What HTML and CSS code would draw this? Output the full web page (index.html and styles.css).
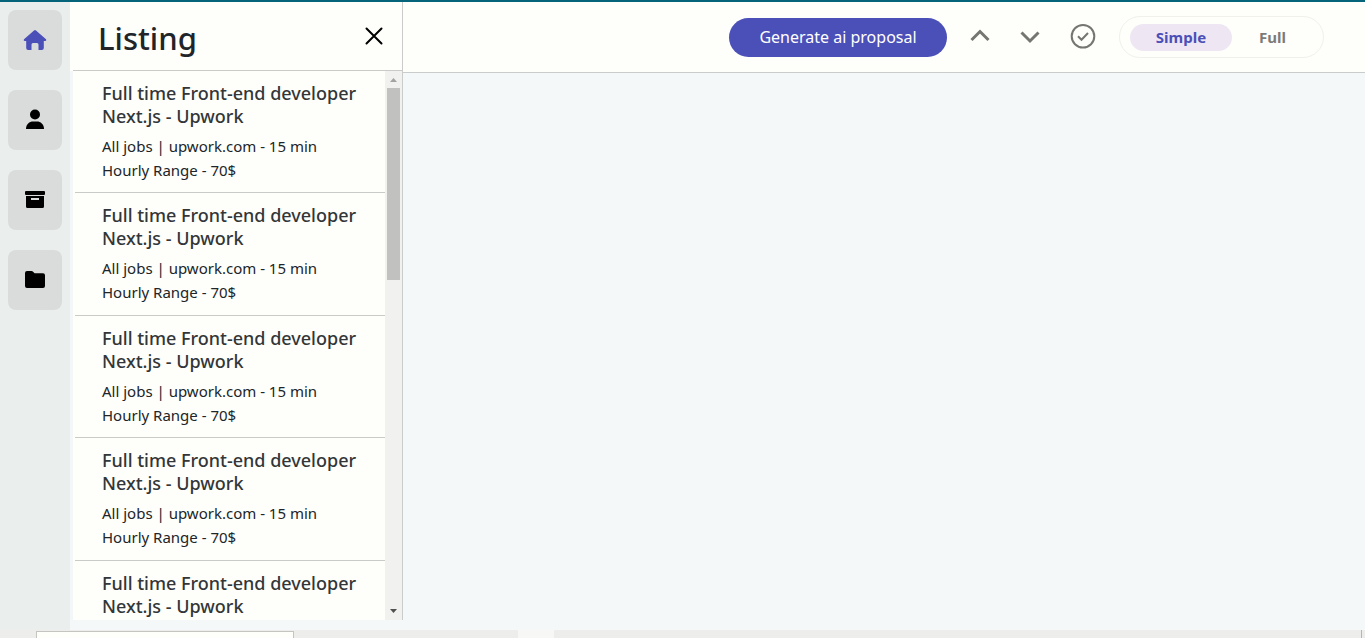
FILE: index.html
```html
<!DOCTYPE html>
<html lang="en">
<head>
    <meta charset="UTF-8">
    <meta name="viewport" content="width=device-width, initial-scale=1.0">
    <title>Listing</title>
    <link rel="stylesheet" href="styles.css">
</head>
<body>
    <div class="app">
        <nav class="sidebar">
            <button type="button" class="side-btn active" aria-label="Home">
                <svg width="24" height="22" viewBox="0 0 24 22"><path d="M11 1.500Q12 .6 13 1.500L23 10.300Q24 11.600 22.400 12H20.800V19Q20.800 21 18.800 21H15.500V15.500Q15.500 14 14 14H10Q8.500 14 8.500 15.500V21H5.200Q3.200 21 3.200 19V12H1.600Q0 11.600 1 10.300Z"/></svg>
            </button>
            <button type="button" class="side-btn" aria-label="Profile">
                <svg width="24" height="22" viewBox="0 0 24 22"><circle cx="12" cy="5.500" r="5"/><path d="M3 20C3 15 6.500 12.500 10 12.500H14C17.500 12.500 21 15 21 20Z"/></svg>
            </button>
            <button type="button" class="side-btn" aria-label="Archive">
                <svg width="24" height="22" viewBox="0 0 24 22"><rect x="2" y="2" width="20" height="4" rx="1"/><path fill-rule="evenodd" d="M3 7H21V17.500Q21 19 19.500 19H4.500Q3 19 3 17.500ZM8 9V11H16V9Z"/></svg>
            </button>
            <button type="button" class="side-btn" aria-label="Folders">
                <svg width="24" height="22" viewBox="0 0 24 22"><path d="M2 4Q2 2 4 2H8.500Q9.500 2 10.300 2.900L11.600 4.200H20Q22 4.200 22 6.200V17Q22 19 20 19H4Q2 19 2 17Z"/></svg>
            </button>
        </nav>

        <aside class="panel">
            <div class="panel-header">
                <h1>Listing</h1>
                <button type="button" class="close-btn" aria-label="Close">
                    <svg width="18" height="18" viewBox="0 0 18 18"><path d="M1.500 1.500L16.500 16.500M16.500 1.500L1.500 16.500"/></svg>
                </button>
            </div>
            <div class="panel-body">
                <ul class="jobs">
                    <li class="job">
                        <h2>Full time Front-end developer Next.js - Upwork</h2>
                        <p>All jobs | upwork.com - 15 min</p>
                        <p>Hourly Range - 70$</p>
                    </li>
                    <li class="job">
                        <h2>Full time Front-end developer Next.js - Upwork</h2>
                        <p>All jobs | upwork.com - 15 min</p>
                        <p>Hourly Range - 70$</p>
                    </li>
                    <li class="job">
                        <h2>Full time Front-end developer Next.js - Upwork</h2>
                        <p>All jobs | upwork.com - 15 min</p>
                        <p>Hourly Range - 70$</p>
                    </li>
                    <li class="job">
                        <h2>Full time Front-end developer Next.js - Upwork</h2>
                        <p>All jobs | upwork.com - 15 min</p>
                        <p>Hourly Range - 70$</p>
                    </li>
                    <li class="job">
                        <h2>Full time Front-end developer Next.js - Upwork</h2>
                    </li>
                </ul>
                <div class="scrollbar">
                    <svg class="arrow-up" width="17" height="17" viewBox="0 0 17 17"><path d="M5 11L8.500 7L12 11Z"/></svg>
                    <div class="thumb"></div>
                    <svg class="arrow-down" width="17" height="17" viewBox="0 0 17 17"><path d="M5 6L8.500 10L12 6Z"/></svg>
                </div>
            </div>
        </aside>

        <main class="content">
            <header class="topbar">
                <button type="button" class="generate-btn">Generate ai proposal</button>
                <button type="button" class="icon-btn" aria-label="Previous">
                    <svg width="20" height="20" viewBox="0 0 20 20"><path d="M1.500 13L10 4.500L18.500 13"/></svg>
                </button>
                <button type="button" class="icon-btn" aria-label="Next">
                    <svg width="20" height="20" viewBox="0 0 20 20"><path d="M1.500 5.500L10 14L18.500 5.500"/></svg>
                </button>
                <button type="button" class="icon-btn check" aria-label="Done">
                    <svg width="26" height="26" viewBox="0 0 26 26"><circle cx="13" cy="12.300" r="11.300"/><path d="M8 12.300L11.500 15.800L18 9"/></svg>
                </button>
                <div class="toggle">
                    <button type="button" class="toggle-btn selected">Simple</button>
                    <button type="button" class="toggle-btn">Full</button>
                </div>
            </header>
        </main>
    </div>

    <footer class="bottom-strip">
        <div class="strip-box"></div>
        <div class="strip-mark"></div>
        <div class="strip-end"></div>
    </footer>
</body>
</html>
```

FILE: styles.css
```css
* {
  box-sizing: border-box;
}

body {
  margin: 0;
  height: 100vh;
  display: flex;
  flex-direction: column;
  border-top: 2px solid #06647a;
  background-color: #f4f8f9;
  color: #212529;
  font-family: "Segoe UI", "Noto Sans", sans-serif;
  overflow: hidden;
}

h1, h2, p, ul {
  margin: 0;
  padding: 0;
}

button {
  border: none;
  padding: 0;
  background: none;
  font-family: inherit;
  cursor: pointer;
}

svg {
  display: block;
}

.app {
  flex: 1;
  min-height: 0;
  display: flex;
}

/* sidebar */
.sidebar {
  width: 70px;
  padding: 8px;
  display: flex;
  flex-direction: column;
  gap: 20px;
  background-color: #eaefee;
}

.side-btn {
  width: 54px;
  height: 60px;
  display: flex;
  align-items: center;
  justify-content: center;
  border-radius: 8px;
  background-color: #dadcdb;
  fill: #000;
}

.side-btn.active {
  fill: #4b4fb8;
}

/* listing panel */
.panel {
  width: 333px;
  margin-bottom: 10px;
  display: flex;
  flex-direction: column;
  border-right: 1px solid #c9cccb;
  background-color: #fefffb;
}

.panel-header {
  height: 69px;
  margin-left: 3px;
  padding: 0 19px 0 25px;
  display: flex;
  align-items: center;
  justify-content: space-between;
  border-bottom: 1px solid #c9cbc8;
}

.panel-header h1 {
  padding-top: 3px;
  font-size: 31px;
  font-weight: 500;
  line-height: 40px;
}

.close-btn svg {
  fill: none;
  stroke: #000;
  stroke-width: 2;
  stroke-linecap: round;
}

.panel-body {
  flex: 1;
  min-height: 0;
  display: flex;
  border-left: 3px solid #f4f7f8;
  overflow: hidden;
}

.jobs {
  flex: 1;
  padding-left: 2px;
  list-style: none;
}

.job {
  height: 123px;
  padding: 11px 20px 0 27px;
  border-bottom: 1px solid #c9cbc8;
}

.job:nth-child(odd) {
  height: 122px;
}

.job h2 {
  margin-bottom: 6px;
  color: #333638;
  font-size: 18px;
  font-weight: 500;
  line-height: 23px;
}

.job p {
  font-size: 15px;
  line-height: 24px;
}

.scrollbar {
  width: 17px;
  display: flex;
  flex-direction: column;
  background-color: #f1f1ef;
}

.thumb {
  width: 13px;
  height: 192px;
  margin: 0 auto;
  background-color: #c1c1bf;
}

.arrow-up {
  fill: #a3a3a3;
}

.arrow-down {
  margin-top: auto;
  fill: #505050;
}

/* top bar */
.content {
  flex: 1;
}

.topbar {
  height: 71px;
  padding-right: 41px;
  display: flex;
  align-items: center;
  justify-content: flex-end;
  border-bottom: 1px solid #c9cccb;
  background-color: #fefffb;
}

.generate-btn {
  width: 218px;
  height: 39px;
  margin-right: 23px;
  border-radius: 20px;
  background-color: #4b4fb8;
  color: #fff;
  font-size: 16px;
}

.icon-btn {
  margin-right: 30px;
  fill: none;
  stroke: #757572;
  stroke-width: 3;
}

.icon-btn.check {
  margin-right: 23px;
  stroke-width: 2;
}

.toggle {
  height: 42px;
  padding: 0 10px;
  display: flex;
  align-items: center;
  border: 1px solid #eff1ea;
  border-radius: 21px;
}

.toggle-btn {
  width: 102px;
  height: 27px;
  border-radius: 14px;
  color: #7b7b79;
  font-size: 15px;
  font-weight: 700;
}

.toggle-btn:last-child {
  width: 81px;
}

.toggle-btn.selected {
  background-color: #eee7f3;
  color: #4b4fb8;
}

/* bottom strip */
.bottom-strip {
  height: 8px;
  padding: 0 3px 0 36px;
  display: flex;
  background-color: #ededeb;
}

.strip-box {
  width: 258px;
  margin-top: 1px;
  border: 1px solid #c4c5c1;
  border-bottom: none;
  background-color: #fefffb;
}

.strip-mark {
  width: 36px;
  margin-left: 224px;
  background-color: #f7f7f5;
}

.strip-end {
  width: 1px;
  margin-left: auto;
  background-color: #b5b5b3;
}
```
